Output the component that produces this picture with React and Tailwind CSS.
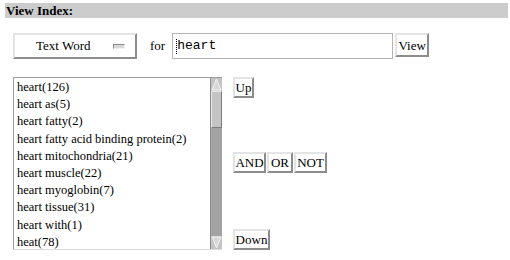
import React from 'react';

const items = [
    'heart(126)',
    'heart as(5)',
    'heart fatty(2)',
    'heart fatty acid binding protein(2)',
    'heart mitochondria(21)',
    'heart muscle(22)',
    'heart myoglobin(7)',
    'heart tissue(31)',
    'heart with(1)',
    'heat(78)',
];

const bevel = 'border-2 border-t-[#e4e4e4] border-l-[#e4e4e4] border-b-[#8c8c8c] border-r-[#8c8c8c] bg-white';

const Btn = ({ children, className = '' }) => (
    <button className={`${bevel} h-[21px] flex items-center justify-center p-0 text-[13px] leading-[15px] text-black ${className}`}>
        {children}
    </button>
);

const App = () => {
    return (
        <div className="w-[510px] h-[260px] bg-white text-black font-['Liberation_Serif',serif] overflow-hidden">
            {/* header bar */}
            <div className="ml-[5px] mr-[2px] mt-[3px] h-[15px] bg-[#cccccc] pl-[1px] text-[13px] font-bold leading-[15px]">
                View Index:
            </div>

            {/* search row */}
            <div className="flex items-start mt-[15px] pl-[13px]">
                <div className={`${bevel} w-[124px] h-[26px] flex items-center`}>
                    <span className="ml-[21px] text-[13px]">Text Word</span>
                    <span className="ml-[22px] w-[12px] h-[5px] border border-t-[#8c8c8c] border-l-[#8c8c8c] border-b-[#f0f0f0] border-r-[#f0f0f0] bg-[#d8d8d8]" />
                </div>
                <span className="ml-[13px] h-[26px] leading-[26px] text-[13px]">for</span>
                <div className="ml-[7px] w-[221px] h-[26px] border border-[#b4b4b4] flex items-center pl-[3px]">
                    <span className="w-px h-[15px] border-l border-dotted border-black" />
                    <span className="font-['Liberation_Mono',monospace] text-[13px]">heart</span>
                </div>
                <Btn className="ml-[2px] h-[24px] w-[34px]">View</Btn>
            </div>

            {/* list + operators */}
            <div className="flex mt-[18px] pl-[13px]">
                <div className="flex w-[209px] h-[173px] border-t border-l border-[#9c9c9c] border-b border-b-[#dcdcdc]">
                    <ul className="flex-1 pl-[3px] pt-[1px] text-[12.5px] leading-[17.2px] whitespace-nowrap overflow-hidden">
                        {items.map(item => (
                            <li key={item}>{item}</li>
                        ))}
                    </ul>
                    <div className="w-[12px] flex flex-col bg-[#a3a3a3] border-l border-[#8c8c8c]">
                        <svg width="11" height="13" viewBox="0 0 11 13" className="block">
                            <rect width="11" height="13" fill="#c4c4c4" />
                            <polygon points="5.5,1 1,12 10,12" fill="#d8d8d8" stroke="#f4f4f4" strokeWidth="1" />
                        </svg>
                        <div className="h-[37px] bg-[#c4c4c4] border border-t-[#e8e8e8] border-l-[#e8e8e8] border-b-[#7c7c7c] border-r-[#7c7c7c]" />
                        <div className="flex-1" />
                        <svg width="11" height="13" viewBox="0 0 11 13" className="block">
                            <rect width="11" height="13" fill="#c4c4c4" />
                            <polygon points="1,1 10,1 5.5,12" fill="#d8d8d8" stroke="#f4f4f4" strokeWidth="1" />
                        </svg>
                    </div>
                </div>
                <div className="ml-[11px] flex flex-col justify-between h-[173px]">
                    <div>
                        <Btn className="w-[21px]">Up</Btn>
                    </div>
                    <div className="flex gap-[1px] mb-[3px]">
                        <Btn className="w-[33px]">AND</Btn>
                        <Btn className="w-[26px]">OR</Btn>
                        <Btn className="w-[33px]">NOT</Btn>
                    </div>
                    <div>
                        <Btn className="w-[37px]">Down</Btn>
                    </div>
                </div>
            </div>
        </div>
    );
};

export default App;
